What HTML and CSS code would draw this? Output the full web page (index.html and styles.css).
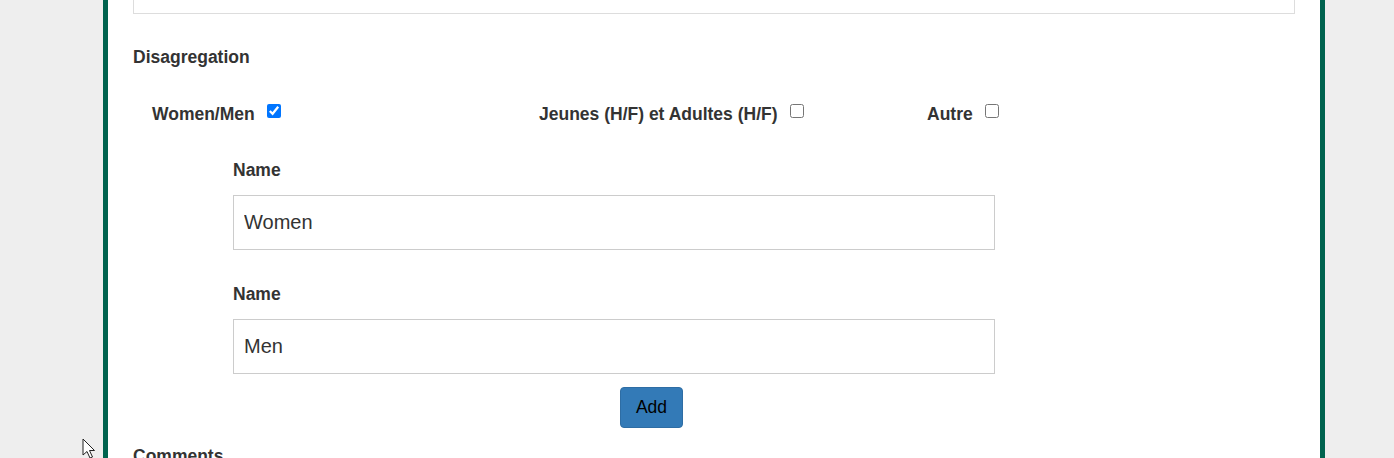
FILE: index.html
```html
<!DOCTYPE html>
<html>
<head>
<meta charset="utf-8">
<link rel="stylesheet" href="styles.css">
</head>
<body>
<div class="page">
  <div class="top-box"></div>
  <div class="section-label">Disagregation</div>
  <div class="check-row">
    <label class="check-item">Women/Men <input type="checkbox" checked></label>
    <label class="check-item">Jeunes (H/F) et Adultes (H/F) <input type="checkbox"></label>
    <label class="check-item">Autre <input type="checkbox"></label>
  </div>
  <div class="fields">
    <div class="field">
      <div class="field-label">Name</div>
      <input class="text-input" type="text" value="Women">
    </div>
    <div class="field">
      <div class="field-label">Name</div>
      <input class="text-input" type="text" value="Men">
    </div>
    <button class="add-btn">Add</button>
  </div>
  <div class="section-label comments">Comments</div>
</div>
<svg class="cursor" width="14" height="22" viewBox="0 0 14 22"><path d="M1 1 L1 17 L5 13.5 L8 20 L10.5 19 L7.5 12.5 L12.5 12.5 Z" fill="#fff" stroke="#222" stroke-width="1"/></svg>
</body>
</html>
```
FILE: styles.css
```css
html, body {
  margin: 0;
  padding: 0;
  background: #eeeeee;
  height: 458px;
  overflow: hidden;
}
body {
  font-family: "Liberation Sans", Arial, sans-serif;
  color: #333333;
  position: relative;
}
.page {
  margin-left: 103px;
  border-left: 5px solid #00634f;
  border-right: 5px solid #00634f;
  background: #ffffff;
  padding: 0 25px;
  box-sizing: content-box;
  width: 1162px;
  height: 458px;
}
.top-box {
  height: 13px;
  border: 1px solid #dddddd;
  border-top: none;
}
.section-label {
  font-weight: bold;
  font-size: 17.5px;
  line-height: 25px;
  margin-top: 31px;
}
.check-row {
  display: grid;
  grid-template-columns: 387px 388px 387px;
  margin-top: 32px;
  margin-bottom: -1px;
  padding-left: 19px;
}
.check-item {
  font-weight: bold;
  font-size: 17.5px;
  line-height: 25px;
  display: flex;
  align-items: center;
}
.check-item input {
  width: 14px;
  height: 14px;
  margin: 0 0 8px 12px;
  accent-color: #0075ff;
}
.fields {
  margin-left: 100px;
  width: 762px;
  margin-top: 31px;
}
.field + .field {
  margin-top: 31px;
}
.field-label {
  font-weight: bold;
  font-size: 17.5px;
  line-height: 25px;
  padding-top: 1px;
}
.text-input {
  display: block;
  box-sizing: border-box;
  width: 762px;
  height: 55px;
  margin-top: 12px;
  border: 1px solid #cccccc;
  padding: 0 10px;
  font-family: "Liberation Sans", Arial, sans-serif;
  font-size: 20px;
  color: #333333;
  outline: none;
}
.add-btn {
  display: block;
  margin: 13px 0 0 387px;
  width: 63px;
  height: 41px;
  background: #337ab7;
  border: 1px solid #2e6da4;
  border-radius: 4px;
  font-family: "Liberation Sans", Arial, sans-serif;
  font-size: 17.5px;
  color: #000000;
  padding: 0;
}
.comments {
  margin-top: 16px;
}
.cursor {
  position: absolute;
  left: 82px;
  top: 438px;
}
```
